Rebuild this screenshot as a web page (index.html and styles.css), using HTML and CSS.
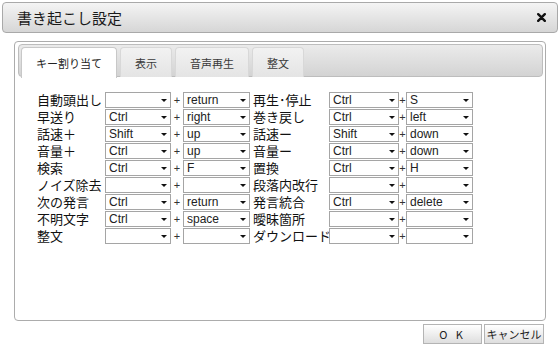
FILE: index.html
```html
<!DOCTYPE html>
<html lang="ja">
<head>
    <meta charset="UTF-8">
    <title>書き起こし設定</title>
    <link rel="stylesheet" href="styles.css">
</head>
<body>
    <div class="dialog">
        <div class="titlebar">
            <span class="title">書き起こし設定</span>
            <button class="close" title="閉じる">
                <svg width="9" height="9" viewBox="0 0 9 9"><path d="M1.2 1.2 L7.8 7.8 M7.8 1.2 L1.2 7.8" stroke="#111" stroke-width="2.4" stroke-linecap="round"/></svg>
            </button>
        </div>

        <div class="panel">
            <!-- タブ -->
            <ul class="tabs">
                <li class="tab active">キー割り当て</li>
                <li class="tab">表示</li>
                <li class="tab">音声再生</li>
                <li class="tab">整文</li>
            </ul>

            <!-- キー割り当て -->
            <div class="keys" id="keys"></div>
        </div>

        <div class="actions">
            <button class="btn ok">O K</button>
            <button class="btn">キャンセル</button>
        </div>
    </div>

    <script>
        const keys = document.getElementById('keys');

        // [左ラベル, 修飾キー, キー, 右ラベル, 修飾キー, キー]
        const rows = [
            ['自動頭出し', '', 'return', '再生･停止', 'Ctrl', 'S'],
            ['早送り', 'Ctrl', 'right', '巻き戻し', 'Ctrl', 'left'],
            ['話速＋', 'Shift', 'up', '話速ー', 'Shift', 'down'],
            ['音量＋', 'Ctrl', 'up', '音量ー', 'Ctrl', 'down'],
            ['検索', 'Ctrl', 'F', '置換', 'Ctrl', 'H'],
            ['ノイズ除去', '', '', '段落内改行', '', ''],
            ['次の発言', 'Ctrl', 'return', '発言統合', 'Ctrl', 'delete'],
            ['不明文字', 'Ctrl', 'space', '曖昧箇所', '', ''],
            ['整文', '', '', 'ダウンロード', '', '']
        ];

        function pick(value) {
            return `<span class="pick"><select><option>${value}</option></select></span>`;
        }

        rows.forEach(r => {
            keys.innerHTML += `
                <span class="label">${r[0]}</span>${pick(r[1])}<span class="plus">+</span>${pick(r[2])}
                <span class="label right">${r[3]}</span>${pick(r[4])}<span class="plus">+</span>${pick(r[5])}
            `;
        });
    </script>
</body>
</html>
```

FILE: styles.css
```css
body {
    margin: 0;
    font-family: "Noto Sans CJK JP", "Liberation Sans", sans-serif;
    background-color: #ffffff;
    color: #222222;
}

.dialog {
    width: 560px;
    height: 352px;
    padding: 2px;
    box-sizing: border-box;
}

.titlebar {
    height: 31px;
    box-sizing: border-box;
    border: 1px solid #a9a9a9;
    border-radius: 4px;
    background: linear-gradient(#f4f4f4, #d6d6d6);
    display: flex;
    align-items: center;
    justify-content: space-between;
    padding: 0 10px 0 14px;
}

.title {
    font-size: 15px;
    color: #1a1a1a;
}

.close {
    border: none;
    background: none;
    padding: 0;
    width: 11px;
    height: 11px;
    display: flex;
    align-items: center;
    justify-content: center;
}

.panel {
    margin: 8px 12px 0 12px;
    height: 280px;
    box-sizing: border-box;
    border: 1px solid #acacac;
    border-radius: 4px;
    background-color: #ffffff;
}

.tabs {
    list-style: none;
    margin: 2px 2px 0 3px;
    padding: 2px 0 0 2px;
    height: 33px;
    box-sizing: border-box;
    border: 1px solid #bdbdbd;
    border-radius: 4px;
    background: linear-gradient(#ebebeb, #d3d3d3);
    display: flex;
    gap: 3px;
}

.tab {
    height: 30px;
    padding: 0 14px;
    display: flex;
    align-items: center;
    font-size: 11px;
    line-height: 14px;
    color: #3a3a3a;
    border: 1px solid #d8d8d8;
    border-bottom: none;
    border-radius: 4px 4px 0 0;
    background: linear-gradient(#f2f2f2, #e4e4e4);
    box-sizing: border-box;
}

.tab.active {
    height: 31px;
    background: #ffffff;
    border-color: #c8c8c8;
    color: #222222;
}

.keys {
    margin: 14px 0 0 22px;
    display: grid;
    grid-template-columns: 68px 66px 12px 67px 79px 70px 7px 67px;
    grid-auto-rows: 17px;
    align-items: center;
}

.label {
    font-size: 13px;
    line-height: 17px;
    height: 17px;
    white-space: nowrap;
    color: #111111;
}

.label.right {
    padding-left: 3px;
}

.plus {
    font-family: "Liberation Sans", sans-serif;
    font-size: 11px;
    line-height: 16px;
    text-align: center;
    color: #333333;
}

.pick {
    position: relative;
    display: block;
    height: 16px;
}

.pick select {
    display: block;
    appearance: none;
    width: 100%;
    height: 16px;
    margin: 0;
    padding: 0 0 0 3px;
    border: 1px solid #a5a5a5;
    border-radius: 0;
    background: #ffffff;
    font-family: "Liberation Sans", sans-serif;
    font-size: 12px;
    line-height: 14px;
    color: #222222;
}

.pick::after {
    content: "";
    position: absolute;
    right: 4px;
    top: 7px;
    border-left: 3px solid transparent;
    border-right: 3px solid transparent;
    border-top: 3px solid #111111;
}

.actions {
    display: flex;
    justify-content: flex-end;
    gap: 2px;
    margin: 3px 14px 0 0;
}

.btn {
    width: 60px;
    height: 20px;
    padding: 0;
    border: 1px solid #b4b4b4;
    background: linear-gradient(#ffffff, #dedede);
    font-family: "Noto Sans CJK JP", "Liberation Sans", sans-serif;
    font-size: 11px;
    color: #222222;
}

.btn.ok {
    width: 59px;
    letter-spacing: 3px;
}
```
